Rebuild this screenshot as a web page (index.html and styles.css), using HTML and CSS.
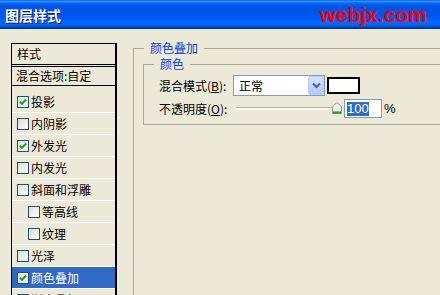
FILE: index.html
```html
<!DOCTYPE html>
<html lang="zh-CN">
<head>
<meta charset="utf-8">
<title>图层样式</title>
<link rel="stylesheet" href="styles.css">
</head>
<body>
<div class="titlebar">
  <span class="title">图层样式</span>
  <span class="brand">webjx.com</span>
</div>
<div class="main">
  <div class="styles-list">
    <div class="list-head">样式</div>
    <div class="list-blend">混合选项:自定</div>
    <ul class="items">
      <li class="item"><svg class="cb" width="12" height="12" viewBox="0 0 12 12"><rect x="0.5" y="0.5" width="11" height="11" fill="url(#cbfill)" stroke="#1C5180"/><polyline points="2.8,5.6 4.9,7.8 9.2,3.4" fill="none" stroke="#21A121" stroke-width="2.1"/></svg><span>投影</span></li>
      <li class="item"><svg class="cb" width="12" height="12" viewBox="0 0 12 12"><rect x="0.5" y="0.5" width="11" height="11" fill="url(#cbfill)" stroke="#1C5180"/></svg><span>内阴影</span></li>
      <li class="item"><svg class="cb" width="12" height="12" viewBox="0 0 12 12"><rect x="0.5" y="0.5" width="11" height="11" fill="url(#cbfill)" stroke="#1C5180"/><polyline points="2.8,5.6 4.9,7.8 9.2,3.4" fill="none" stroke="#21A121" stroke-width="2.1"/></svg><span>外发光</span></li>
      <li class="item"><svg class="cb" width="12" height="12" viewBox="0 0 12 12"><rect x="0.5" y="0.5" width="11" height="11" fill="url(#cbfill)" stroke="#1C5180"/></svg><span>内发光</span></li>
      <li class="item"><svg class="cb" width="12" height="12" viewBox="0 0 12 12"><rect x="0.5" y="0.5" width="11" height="11" fill="url(#cbfill)" stroke="#1C5180"/></svg><span>斜面和浮雕</span></li>
      <li class="item sub"><svg class="cb" width="12" height="12" viewBox="0 0 12 12"><rect x="0.5" y="0.5" width="11" height="11" fill="url(#cbfill)" stroke="#1C5180"/></svg><span>等高线</span></li>
      <li class="item sub"><svg class="cb" width="12" height="12" viewBox="0 0 12 12"><rect x="0.5" y="0.5" width="11" height="11" fill="url(#cbfill)" stroke="#1C5180"/></svg><span>纹理</span></li>
      <li class="item"><svg class="cb" width="12" height="12" viewBox="0 0 12 12"><rect x="0.5" y="0.5" width="11" height="11" fill="url(#cbfill)" stroke="#1C5180"/></svg><span>光泽</span></li>
      <li class="item selected"><svg class="cb" width="12" height="12" viewBox="0 0 12 12"><rect x="0.5" y="0.5" width="11" height="11" fill="url(#cbfill)" stroke="#1C5180"/><polyline points="2.8,5.6 4.9,7.8 9.2,3.4" fill="none" stroke="#21A121" stroke-width="2.1"/></svg><span>颜色叠加</span></li>
      <li class="item"><svg class="cb" width="12" height="12" viewBox="0 0 12 12"><rect x="0.5" y="0.5" width="11" height="11" fill="url(#cbfill)" stroke="#1C5180"/></svg><span>渐变叠加</span></li>
    </ul>
  </div>
  <div class="panel">
    <fieldset class="group outer">
      <legend>颜色叠加</legend>
      <fieldset class="group inner">
        <legend>颜色</legend>
        <div class="row row-mode">
          <span class="label">混合模式(<u>B</u>):</span>
          <div class="combo">
            <span class="combo-text">正常</span>
            <span class="combo-btn"><svg width="9" height="7" viewBox="0 0 9 7"><polyline points="1,1.5 4.5,5 8,1.5" fill="none" stroke="#4D6185" stroke-width="2"/></svg></span>
          </div>
          <div class="swatch"></div>
        </div>
        <div class="row row-opacity">
          <span class="label">不透明度(<u>O</u>):</span>
          <div class="slider">
            <div class="track"></div>
            <svg class="thumb" width="10" height="12" viewBox="0 0 10 12"><path d="M0.5 11.5 V4.6 L5 0.6 L9.5 4.6 V11.5 Z" fill="url(#thumbfill)" stroke="#8E9A87"/><rect x="1" y="9.5" width="8" height="2" fill="#21A121"/></svg>
          </div>
          <div class="num"><span class="sel">100</span></div>
          <span class="pct">%</span>
        </div>
      </fieldset>
    </fieldset>
  </div>
</div>
<svg class="defs" width="0" height="0">
  <defs>
    <linearGradient id="cbfill" x1="0" y1="0" x2="1" y2="1">
      <stop offset="0" stop-color="#DCDCD7"/>
      <stop offset="1" stop-color="#FFFFFF"/>
    </linearGradient>
    <linearGradient id="thumbfill" x1="0" y1="0" x2="0" y2="1">
      <stop offset="0" stop-color="#FFFFFF"/>
      <stop offset="1" stop-color="#E3E2DA"/>
    </linearGradient>
  </defs>
</svg>
</body>
</html>
```
FILE: styles.css
```css
* { box-sizing: border-box; }
html, body { margin: 0; padding: 0; }
body {
  width: 440px;
  height: 295px;
  overflow: hidden;
  background: #ECE9D8;
  font-family: "Noto Sans CJK SC", "Noto Sans", sans-serif;
  font-size: 12px;
  color: #000;
}
.titlebar {
  height: 29px;
  display: flex;
  align-items: center;
  justify-content: space-between;
  padding: 0 13px 0 5px;
  background: linear-gradient(180deg, #0058ee 0%, #3593ff 4%, #288eff 6%, #127dff 8%, #036ffc 10%, #0262ee 14%, #0057e5 20%, #0054e3 24%, #0055eb 56%, #005bf5 66%, #026afe 76%, #0062ef 86%, #0052d6 92%, #0040ab 94%, #003092 100%);
}
.title {
  color: #fff;
  font-weight: 700;
  font-size: 14px;
  line-height: 16px;
  text-shadow: 1px 1px 0 #0A1883;
}
.brand {
  font-family: "Liberation Sans", Arial, sans-serif;
  font-weight: 700;
  font-size: 21px;
  line-height: 24px;
  color: #FF0000;
}
.main {
  display: flex;
  height: 266px;
  overflow: hidden;
}
.styles-list {
  flex-shrink: 0;
  width: 106px;
  height: 270px;
  margin: 14px 0 0 11px;
  border: 1px solid #000;
  border-right-width: 2px;
}
.list-head {
  height: 23px;
  line-height: 20px;
  padding-left: 5px;
  border-bottom: 3px double #000;
}
.list-blend {
  height: 19px;
  line-height: 18px;
  padding-left: 4px;
  border-bottom: 1px solid #000;
}
.items {
  list-style: none;
  margin: 0;
  padding: 5px 0 0;
}
.item {
  height: 22px;
  display: flex;
  align-items: center;
  gap: 2px;
  padding-left: 5px;
  border-bottom: 1px solid #fff;
  line-height: 21px;
}
.item.sub { padding-left: 16px; }
.item.selected { background: #316AC5; color: #fff; }
.cb { flex-shrink: 0; display: block; }
.panel {
  flex: 1;
  margin-left: 16px;
  margin-right: -30px;
}
.group {
  margin: 0;
  min-width: 0;
  border: 1px solid #ACA899;
}
.group > legend {
  padding: 0 6px;
  margin-left: 1px;
  color: #0046D5;
  font-size: 12px;
  line-height: 14px;
}
.outer {
  height: 260px;
  margin-top: 12px;
  padding: 0 0 0 9px;
}
.inner {
  margin-top: 2px;
  padding: 4px 0 6px 9px;
}
.row {
  display: flex;
  align-items: center;
  padding-left: 6px;
}
.row-mode { height: 21px; }
.row-opacity { height: 19px; margin-top: 3px; }
.label { width: 74px; flex-shrink: 0; white-space: nowrap; }
.combo {
  width: 92px;
  height: 21px;
  border: 1px solid #7F9DB9;
  background: #fff;
  display: flex;
  align-items: center;
  justify-content: space-between;
}
.combo-text { padding-left: 5px; }
.combo-btn {
  width: 16px;
  height: 19px;
  display: flex;
  align-items: center;
  justify-content: center;
  background: linear-gradient(180deg, #D6E2FD 0%, #C3D5FB 50%, #B4C9F7 100%);
  border: 1px solid #BCCDF5;
  border-radius: 2px;
}
.combo-btn svg { display: block; }
.swatch {
  width: 33px;
  height: 17px;
  margin-left: 2px;
  border: 2px solid #000;
  background: #fff;
}
.slider {
  width: 109px;
  height: 19px;
  display: flex;
  align-items: center;
  padding-left: 3px;
}
.track {
  flex: 1;
  height: 3px;
  background: #fff;
  border-top: 1px solid #B5B3A6;
  border-bottom: 1px solid #F4F3EE;
}
.thumb { display: block; flex-shrink: 0; margin-top: -1px; }
.num {
  width: 38px;
  height: 19px;
  margin-left: 2px;
  padding-left: 2px;
  border: 1px solid #7F9DB9;
  background: #fff;
  display: flex;
  align-items: center;
}
.sel {
  background: #316AC5;
  color: #fff;
  font-family: "Liberation Sans", Arial, sans-serif;
  font-size: 13px;
  line-height: 14px;
}
.pct {
  margin-left: 2px;
  font-family: "Liberation Sans", Arial, sans-serif;
  font-size: 13px;
}
.defs { display: block; }
```
